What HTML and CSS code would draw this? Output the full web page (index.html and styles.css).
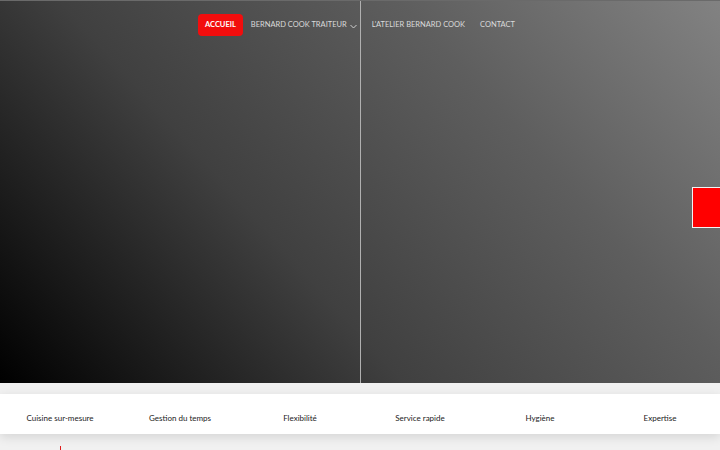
FILE: index.html
```html
<!DOCTYPE html>
<html lang="fr">
<head>
    <meta charset="UTF-8">
    <meta name="viewport" content="width=device-width, initial-scale=1.0">
    <title>Bernard Cook Traiteur</title>
    <link rel="stylesheet" href="styles.css">
</head>
<body>
    <header class="hero">
        <nav class="main-nav">
            <a href="#" class="nav-link active">Accueil</a>
            <a href="#" class="nav-link">Bernard Cook Traiteur
                <svg class="chevron" width="7" height="5" viewBox="0 0 7 5"><path d="M0.5 1 L3.5 4 L6.5 1" fill="none" stroke="#cfcfcf" stroke-width="1"/></svg>
            </a>
            <a href="#" class="nav-link">L'atelier Bernard Cook</a>
            <a href="#" class="nav-link">Contact</a>
        </nav>
        <div class="hero-half"></div>
        <div class="hero-half"></div>
        <a href="#" class="side-tab"></a>
    </header>

    <section class="features">
        <div class="feature">Cuisine sur-mesure</div>
        <div class="feature">Gestion du temps</div>
        <div class="feature">Flexibilité</div>
        <div class="feature">Service rapide</div>
        <div class="feature">Hygiène</div>
        <div class="feature">Expertise</div>
    </section>

    <div class="timeline">
        <span class="timeline-mark"></span>
    </div>
</body>
</html>
```

FILE: styles.css
```css
body {
    margin: 0;
    font-family: "Lato", "Liberation Sans", sans-serif;
    background-color: #f1f1f1;
    overflow: hidden;
}

.hero {
    position: relative;
    height: 383px;
    display: flex;
    background: linear-gradient(48deg, #000 0%, #404040 38%, #5e5e5e 70%, #828282 100%);
    border-top: 1px solid #6a6a6a;
    box-sizing: border-box;
}

.hero-half {
    flex: 1;
}

.hero-half:first-of-type {
    border-right: 1px solid #b0b0b0;
}

.main-nav {
    position: absolute;
    top: 13px;
    left: 198px;
    display: flex;
    align-items: center;
}

.nav-link {
    display: flex;
    align-items: center;
    color: #dadada;
    text-decoration: none;
    text-transform: uppercase;
    font-size: 7.5px;
    line-height: 8px;
    padding: 7px 7px;
    margin-right: 1px;
}

.nav-link.active {
    background-color: #f20d0d;
    color: #fff;
    font-weight: bold;
    border-radius: 4px;
}

.chevron {
    margin-left: 3px;
    margin-top: 3px;
}

.side-tab {
    position: absolute;
    right: -2px;
    top: 186px;
    width: 28px;
    height: 39px;
    background-color: #ff0000;
    border: 1px solid #f4f4f4;
}

.features {
    display: grid;
    grid-template-columns: repeat(6, 1fr);
    margin-top: 11px;
    height: 40px;
    background-color: #fff;
    box-shadow: 0 3px 10px rgba(0, 0, 0, 0.12);
}

.feature {
    display: flex;
    align-items: center;
    justify-content: center;
    padding-top: 7px;
    font-size: 8px;
    color: #222;
}

.timeline {
    position: relative;
    height: 20px;
    margin-top: 12px;
}

.timeline-mark {
    position: absolute;
    left: 60px;
    top: 0;
    width: 1px;
    height: 20px;
    background-color: #e01a1a;
}
```
